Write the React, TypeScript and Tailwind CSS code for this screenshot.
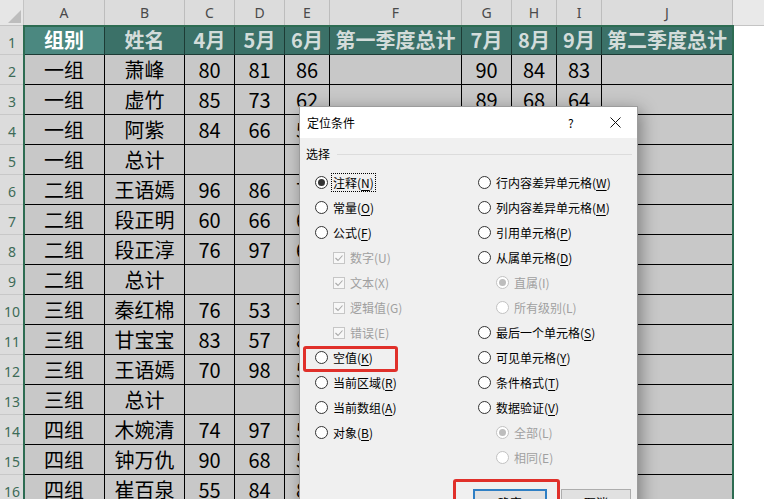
import React from 'react';

type Col = { l: string; w: string };
const cols: Col[] = [
  { l: 'A', w: 'w-[81px]' },
  { l: 'B', w: 'w-[80px]' },
  { l: 'C', w: 'w-[50px]' },
  { l: 'D', w: 'w-[50px]' },
  { l: 'E', w: 'w-[45px]' },
  { l: 'F', w: 'w-[132px]' },
  { l: 'G', w: 'w-[50px]' },
  { l: 'H', w: 'w-[45px]' },
  { l: 'I', w: 'w-[45px]' },
  { l: 'J', w: 'w-[131px]' },
];

const header = ['组别', '姓名', '4月', '5月', '6月', '第一季度总计', '7月', '8月', '9月', '第二季度总计'];

const rows: string[][] = [
  ['一组', '萧峰', '80', '81', '86', '', '90', '84', '83', ''],
  ['一组', '虚竹', '85', '73', '62', '', '89', '68', '64', ''],
  ['一组', '阿紫', '84', '66', '56', '', '', '', '', ''],
  ['一组', '总计', '', '', '', '', '', '', '', ''],
  ['二组', '王语嫣', '96', '86', '72', '', '', '', '', ''],
  ['二组', '段正明', '60', '66', '61', '', '', '', '', ''],
  ['二组', '段正淳', '76', '97', '63', '', '', '', '', ''],
  ['二组', '总计', '', '', '', '', '', '', '', ''],
  ['三组', '秦红棉', '76', '53', '71', '', '', '', '', ''],
  ['三组', '甘宝宝', '83', '57', '85', '', '', '', '', ''],
  ['三组', '王语嫣', '70', '98', '59', '', '', '', '', ''],
  ['三组', '总计', '', '', '', '', '', '', '', ''],
  ['四组', '木婉清', '74', '97', '58', '', '', '', '', ''],
  ['四组', '钟万仇', '90', '68', '54', '', '', '', '', ''],
  ['四组', '崔百泉', '55', '84', '82', '', '', '', '', ''],
];

type Item = {
  t: 'radio' | 'check';
  name: string;
  k: string;
  checked?: boolean;
  disabled?: boolean;
  indent?: boolean;
  focus?: boolean;
  red?: boolean;
} | null;

const left: Item[] = [
  { t: 'radio', name: '注释', k: 'N', checked: true, focus: true },
  { t: 'radio', name: '常量', k: 'O' },
  { t: 'radio', name: '公式', k: 'F' },
  { t: 'check', name: '数字', k: 'U', checked: true, disabled: true, indent: true },
  { t: 'check', name: '文本', k: 'X', checked: true, disabled: true, indent: true },
  { t: 'check', name: '逻辑值', k: 'G', checked: true, disabled: true, indent: true },
  { t: 'check', name: '错误', k: 'E', checked: true, disabled: true, indent: true },
  { t: 'radio', name: '空值', k: 'K', red: true },
  { t: 'radio', name: '当前区域', k: 'R' },
  { t: 'radio', name: '当前数组', k: 'A' },
  { t: 'radio', name: '对象', k: 'B' },
  null,
];

const right: Item[] = [
  { t: 'radio', name: '行内容差异单元格', k: 'W' },
  { t: 'radio', name: '列内容差异单元格', k: 'M' },
  { t: 'radio', name: '引用单元格', k: 'P' },
  { t: 'radio', name: '从属单元格', k: 'D' },
  { t: 'radio', name: '直属', k: 'I', checked: true, disabled: true, indent: true },
  { t: 'radio', name: '所有级别', k: 'L', disabled: true, indent: true },
  { t: 'radio', name: '最后一个单元格', k: 'S' },
  { t: 'radio', name: '可见单元格', k: 'Y' },
  { t: 'radio', name: '条件格式', k: 'T' },
  { t: 'radio', name: '数据验证', k: 'V' },
  { t: 'radio', name: '全部', k: 'L', checked: true, disabled: true, indent: true },
  { t: 'radio', name: '相同', k: 'E', disabled: true, indent: true },
];

function Radio({ checked, disabled }: { checked?: boolean; disabled?: boolean }) {
  return (
    <span
      className={`w-[13px] h-[13px] shrink-0 rounded-full border bg-white flex items-center justify-center ${
        disabled ? 'border-[#c2c2c2]' : 'border-[#333333]'
      }`}
    >
      {checked && (
        <span className={`w-[7px] h-[7px] rounded-full ${disabled ? 'bg-[#bdbdbd]' : 'bg-[#333333]'}`} />
      )}
    </span>
  );
}

function Check() {
  return (
    <span className="w-[12px] h-[12px] shrink-0 border border-[#c6c6c6] bg-[#f7f7f7] flex items-center justify-center">
      <svg width="10" height="10" viewBox="0 0 10 10">
        <polyline points="1.5,5 4,7.5 8.5,2.5" fill="none" stroke="#a8a8a8" strokeWidth="1.1" />
      </svg>
    </span>
  );
}

function Row({ it }: { it: Item }) {
  if (!it) return <div className="h-[25px]" />;
  return (
    <div className={`h-[25px] flex items-center relative ${it.indent ? 'pl-[18px]' : ''}`}>
      {it.t === 'radio' ? <Radio checked={it.checked} disabled={it.disabled} /> : <Check />}
      <span
        className={`ml-[3px] px-[1px] leading-[17px] border ${
          it.focus ? 'border-dotted border-black' : 'border-transparent'
        } ${it.disabled ? 'text-[#a0a0a0]' : 'text-black'}`}
      >
        {it.name}(
        {it.disabled ? it.k : <span className="underline underline-offset-2">{it.k}</span>})
      </span>
      {it.red && (
        <span className="absolute -left-[12px] top-[1px] w-[95px] h-[26px] border-[3px] border-[#e0302a] rounded-[3px]" />
      )}
    </div>
  );
}

export default function App() {
  return (
    <div className="relative w-[764px] h-[499px] overflow-hidden bg-white font-['Noto_Sans_CJK_SC',sans-serif]">
      {/* column headers */}
      <div className="flex h-[26px]">
        <div className="w-[24px] bg-[#e6e6e6] border-r border-b border-[#c4c4c4] relative">
          <svg className="absolute right-[2px] bottom-[2px]" width="13" height="13" viewBox="0 0 13 13">
            <polygon points="13,0 13,13 0,13" fill="#bdbdbd" />
          </svg>
        </div>
        {cols.map((c) => (
          <div
            key={c.l}
            className={`${c.w} shrink-0 flex items-center justify-center bg-[#dcdcdc] border-r border-b border-[#bdbdbd] text-[14px] text-[#4a4a4a] font-['Noto_Sans',sans-serif]`}
          >
            {c.l}
          </div>
        ))}
        <div className="flex-1 bg-[#e9e9e9] border-b border-[#c4c4c4]" />
      </div>

      {/* row 1 */}
      <div className="flex h-[29px]">
        <div className="w-[24px] shrink-0 bg-[#dcdcdc] border-b border-[#c8c8c8] flex items-center justify-center pt-[4px] text-[14px] text-[#3d6b57] font-['Noto_Sans',sans-serif]">
          1
        </div>
        {cols.map((c, i) => (
          <div
            key={c.l}
            className={`${c.w} shrink-0 flex items-center justify-center border-r border-b border-[#1d3b35] text-[20px] font-bold whitespace-nowrap overflow-hidden ${
              i === 0 ? 'bg-[#4b8880] text-white' : 'bg-[#3b7168] text-[#d3dcda]'
            }`}
          >
            {header[i]}
          </div>
        ))}
        <div className="flex-1 bg-white" />
      </div>

      {rows.map((r, ri) => (
        <div key={ri} className="flex h-[30px]">
          <div className="w-[24px] shrink-0 bg-[#dcdcdc] border-b border-[#c8c8c8] flex items-center justify-center pt-[4px] text-[14px] text-[#3d6b57] font-['Noto_Sans',sans-serif]">
            {ri + 2}
          </div>
          {cols.map((c, i) => (
            <div
              key={c.l}
              className={`${c.w} shrink-0 flex items-center justify-center bg-[#c8c8c8] border-r border-b border-black text-[20px] text-black whitespace-nowrap overflow-hidden`}
            >
              {r[i]}
            </div>
          ))}
          <div className="flex-1 bg-white" />
        </div>
      ))}

      {/* selection border */}
      <div className="absolute left-[23px] top-[25px] w-[711px] h-[480px] border-2 border-[#2d6c52] pointer-events-none" />

      {/* dialog */}
      <div className="absolute left-[299px] top-[106px] w-[339px] h-[420px] bg-[#f0f0f0] border border-[#9c9c9c] shadow-[3px_4px_16px_rgba(0,0,0,0.38)] text-[12px] text-black">
        <div className="h-[31px] bg-white flex items-center relative pl-[7px]">
          <span>定位条件</span>
          <span className="absolute left-[268px] top-[7px]">?</span>
          <svg className="absolute left-[310px] top-[10px]" width="11" height="11" viewBox="0 0 11 11">
            <path d="M0.5 0.5 L10.5 10.5 M10.5 0.5 L0.5 10.5" stroke="#111" strokeWidth="1" />
          </svg>
        </div>
        <div className="pl-[6px] pr-[5px] pt-[8px]">
          <div className="flex items-center h-[16px]">
            <span>选择</span>
            <div className="flex-1 h-px bg-[#dcdcdc] ml-[7px]" />
          </div>
          <div className="flex mt-[8px] pl-[9px]">
            <div className="w-[163px] shrink-0">
              {left.map((it, i) => (
                <Row key={i} it={it} />
              ))}
            </div>
            <div className="flex-1">
              {right.map((it, i) => (
                <Row key={i} it={it} />
              ))}
            </div>
          </div>
          <div className="flex justify-end gap-[14px] mt-[19px] pr-[1px]">
            <div className="relative">
              <button className="w-[74px] h-[24px] bg-[#e1e1e1] border-2 border-[#2f7fc4] flex items-start justify-center pt-[5px] leading-[14px]">
                确定
              </button>
              <span className="absolute -left-[20px] -top-[10px] w-[107px] h-[46px] border-[3px] border-[#e0302a] rounded-[3px]" />
            </div>
            <button className="w-[70px] h-[24px] bg-[#e1e1e1] border border-[#adadad] flex items-start justify-center pt-[6px] leading-[14px]">
              取消
            </button>
          </div>
        </div>
      </div>
    </div>
  );
}
